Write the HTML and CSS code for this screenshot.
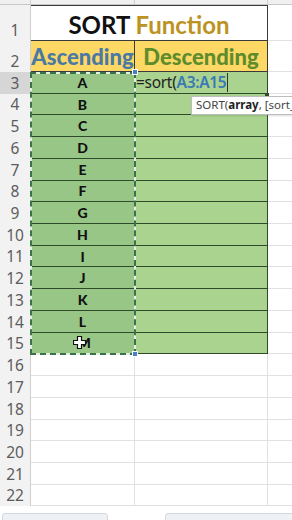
FILE: index.html
```html
<!DOCTYPE html>
<html lang="en">
<head>
    <meta charset="UTF-8">
    <meta name="viewport" content="width=device-width, initial-scale=1.0">
    <title>SORT Function</title>
    <link rel="stylesheet" href="styles.css">
</head>
<body>
    <div class="sheet">
        <div class="colhead">
            <div class="corner"></div>
            <div class="ch"></div>
            <div class="ch"></div>
            <div class="ch"></div>
        </div>

        <div class="row r1">
            <div class="rh">1</div>
            <div class="cell title"><span><span class="t-black">SORT</span> <span class="t-gold">Function</span></span></div>
            <div class="cell empty"></div>
        </div>

        <div class="row r2">
            <div class="rh">2</div>
            <div class="cell head asc">Ascending</div>
            <div class="cell head desc">Descending</div>
            <div class="cell empty"></div>
        </div>

        <div class="row">
            <div class="rh active">3</div>
            <div class="cell a">A</div>
            <div class="cell b edit"><span>=sort(<span class="ref">A3:A15</span></span><span class="caret"></span></div>
            <div class="cell empty"></div>
        </div>

        <div id="dataRows"></div>

        <!-- выделение A3:A15 -->
        <div class="marquee"></div>
        <div class="handle h-top"></div>
        <div class="handle h-bottom"></div>
        <div class="fill-handle"></div>

        <div class="tooltip">SORT(<b>array</b>, [sort_i</div>

        <svg class="pointer" width="13" height="13" viewBox="0 0 13 13">
            <path d="M4.5 0.5h4v4h4v4h-4v4h-4v-4h-4v-4h4z" fill="#fff" stroke="#111" stroke-width="1.2"/>
        </svg>

        <div class="tabs">
            <div class="tab left"></div>
            <div class="tab right"></div>
        </div>
    </div>

    <script>
        // строки 4..22
        const letters = ['B','C','D','E','F','G','H','I','J','K','L','M'];
        const holder = document.getElementById('dataRows');
        for (let n = 4; n <= 22; n++) {
            const row = document.createElement('div');
            row.className = 'row';
            let html = `<div class="rh">${n}</div>`;
            if (n <= 15) {
                const letter = n === 15 ? '&nbsp;M' : letters[n - 4];
                html += `<div class="cell a">${letter}</div><div class="cell b"></div>`;
            } else {
                html += `<div class="cell empty"></div><div class="cell empty"></div>`;
            }
            html += `<div class="cell empty"></div>`;
            row.innerHTML = html;
            holder.appendChild(row);
        }
    </script>
</body>
</html>
```

FILE: styles.css
```css
body {
    margin: 0;
    background-color: #ffffff;
    font-family: 'Lato', 'Noto Sans', sans-serif;
    overflow: hidden;
}
.sheet {
    position: relative;
    width: 292px;
    height: 520px;
    overflow: hidden;
    background-color: #ffffff;
}
.colhead, .row {
    display: grid;
    grid-template-columns: 31px 104px 133px 40px;
}
.colhead {
    height: 5px;
    background-color: #f0f0f0;
    border-bottom: 1px solid #c8c8c8;
    box-sizing: border-box;
}
.colhead .corner {
    border-right: 1px solid #cfcfcf;
}
.colhead .ch {
    border-right: 1px solid #cfcfcf;
}
.row {
    height: 21.72px;
}
.row.r1 {
    height: 36px;
}
.row.r2 {
    height: 31px;
}
.rh {
    background-color: #f2f2f2;
    border-right: 1px solid #cfcfcf;
    color: #5c5c5c;
    font-family: 'Noto Sans', sans-serif;
    font-size: 15.5px;
    display: flex;
    align-items: flex-end;
    justify-content: center;
    line-height: 20px;
    padding-bottom: 1px;
    box-sizing: border-box;
}
.rh.active {
    background-color: #d6d6d6;
}
.cell {
    box-sizing: border-box;
    display: flex;
    align-items: center;
    justify-content: center;
    overflow: hidden;
    white-space: nowrap;
}
.cell.empty {
    border-right: 1px solid #e1e1e1;
    border-bottom: 1px solid #e1e1e1;
}
.title {
    grid-column: span 2;
    border-top: 1px solid #3a3a3a;
    border-right: 1px solid #3a3a3a;
    border-bottom: 1px solid #3a3a3a;
    font-size: 24px;
    font-weight: bold;
    padding-top: 3px;
}
.t-black {
    color: #111111;
}
.t-gold {
    color: #bc9323;
}
.head {
    background-color: #fdd865;
    border-right: 1px solid #3a3a3a;
    border-bottom: 1px solid #3a3a3a;
    font-size: 22px;
    font-weight: 900;
    align-items: flex-end;
    padding-bottom: 1px;
}
.asc {
    color: #4a79a3;
}
.desc {
    color: #5e8c2c;
}
.cell.a {
    background-color: #98c686;
    border-right: 1px solid #2f4a2a;
    border-bottom: 1px solid #2f4a2a;
    font-size: 14px;
    font-weight: 900;
    color: #111;
}
.cell.b {
    background-color: #a9d38f;
    border-right: 1px solid #2f4a2a;
    border-bottom: 1px solid #2f4a2a;
}
.cell.edit {
    justify-content: flex-start;
    font-family: 'Noto Sans', sans-serif;
    font-size: 15.5px;
    color: #222;
    padding-left: 1px;
    letter-spacing: -0.3px;
}
.ref {
    color: #3b78b6;
    font-weight: 600;
}
.caret {
    display: inline-block;
    width: 1px;
    height: 19px;
    margin-left: 1px;
    background-color: #333;
}
.marquee {
    position: absolute;
    left: 30px;
    top: 72px;
    width: 106px;
    height: 283px;
    box-sizing: border-box;
    border: 2px solid #e4eee4;
    pointer-events: none;
}
.marquee::after {
    content: '';
    position: absolute;
    inset: -2px;
    border: 2px dashed #3a7346;
}
.handle {
    position: absolute;
    width: 4px;
    height: 4px;
    background-color: #4a7fc4;
    border: 1px solid #fff;
}
.h-top {
    left: 132px;
    top: 69px;
}
.h-bottom {
    left: 132px;
    top: 351px;
}
.fill-handle {
    position: absolute;
    left: 265px;
    top: 93px;
    width: 4px;
    height: 4px;
    background-color: #2f4a2a;
}
.tooltip {
    position: absolute;
    left: 191px;
    top: 96px;
    height: 17px;
    width: 110px;
    padding: 0 4px;
    background-color: #ffffff;
    border: 1px solid #bdbdbd;
    box-shadow: 1px 1px 2px rgba(0, 0, 0, 0.15);
    font-family: 'Noto Sans', sans-serif;
    font-size: 11.5px;
    line-height: 16px;
    color: #444;
    white-space: nowrap;
}
.tooltip b {
    color: #222;
}
.pointer {
    position: absolute;
    left: 73px;
    top: 336px;
}
.tabs {
    position: absolute;
    left: 0;
    right: 0;
    top: 509px;
    height: 11px;
    background-color: #ffffff;
}
.tab {
    position: absolute;
    top: 4px;
    height: 10px;
    background-color: #eef1f5;
    border: 1px solid #d4d8de;
    border-radius: 3px;
}
.tab.left {
    left: 2px;
    width: 104px;
}
.tab.right {
    left: 165px;
    width: 130px;
}
```
